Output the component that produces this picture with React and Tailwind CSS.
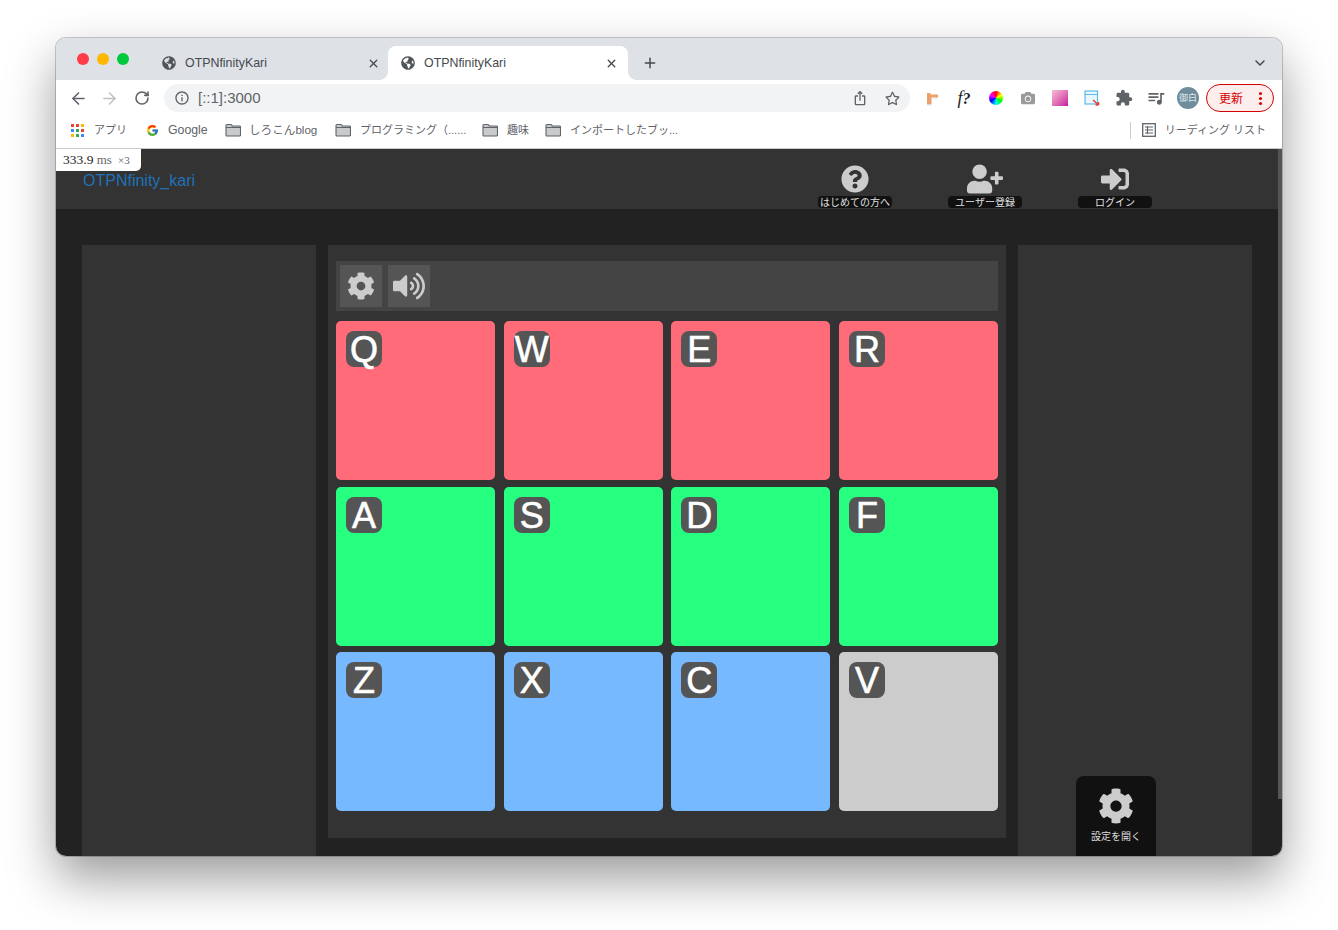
import React from 'react';
import { FaCog, FaGlobeAmericas, FaQuestionCircle, FaSignInAlt, FaUserPlus, FaVolumeUp, FaCamera, FaRegStar } from 'react-icons/fa';
import { FcGoogle } from 'react-icons/fc';
import { MdQueueMusic, MdIosShare, MdInfoOutline, MdExtension } from 'react-icons/md';
import { ArrowLeft, ArrowRight, RotateCw, X, Plus, ChevronDown } from 'lucide-react';

const rows = [
  { keys: ['Q', 'W', 'E', 'R'], colors: ['bg-[#ff6b78]', 'bg-[#ff6b78]', 'bg-[#ff6b78]', 'bg-[#ff6b78]'] },
  { keys: ['A', 'S', 'D', 'F'], colors: ['bg-[#26ff80]', 'bg-[#26ff80]', 'bg-[#26ff80]', 'bg-[#26ff80]'] },
  { keys: ['Z', 'X', 'C', 'V'], colors: ['bg-[#76b9ff]', 'bg-[#76b9ff]', 'bg-[#76b9ff]', 'bg-[#cccccc]'] },
];

const appDots = ['bg-[#ea4335]', 'bg-[#ea4335]', 'bg-[#fbbc04]', 'bg-[#4285f4]', 'bg-[#34a853]', 'bg-[#ea4335]', 'bg-[#fbbc04]', 'bg-[#34a853]', 'bg-[#4285f4]'];

function Folder() {
  return (
    <svg width="16" height="14" viewBox="0 0 16 14" className="shrink-0">
      <path d="M1 2.5C1 1.7 1.6 1.5 2 1.5H6L7.5 3H14.5C15 3 15.5 3.4 15.5 4V12C15.5 12.6 15 13 14.5 13H2C1.4 13 1 12.6 1 12Z" fill="#c9cacb" stroke="#5f6368" strokeWidth="1.1" />
      <path d="M1 4.5H15.5" stroke="#5f6368" strokeWidth="1" />
    </svg>
  );
}

function Tab({ active, className }) {
  return (
    <div className={`relative flex items-center h-[34px] ${className} ${active ? 'bg-white rounded-t-lg' : ''}`}>
      {active && <span className="absolute bottom-0 -left-2 w-2 h-2 bg-[radial-gradient(circle_at_0_0,transparent_7.5px,white_8px)]" />}
      {active && <span className="absolute bottom-0 -right-2 w-2 h-2 bg-[radial-gradient(circle_at_100%_0,transparent_7.5px,white_8px)]" />}
      <FaGlobeAmericas className="text-[#50555a] text-[14px] shrink-0" />
      <span className="ml-[9px] text-[12.4px] text-[#45494e]">OTPNfinityKari</span>
      <X size={13} strokeWidth={2.5} className="ml-auto text-[#45494e]" />
    </div>
  );
}

function ToolButton({ children }) {
  return <div className="w-8 h-7 flex items-center justify-center shrink-0">{children}</div>;
}

function NavItem({ icon, label }) {
  return (
    <div className="w-[74px] flex flex-col items-center">
      <div className="h-[32px] flex items-center text-[#cccccc]">{icon}</div>
      <div className="w-full h-[12px] mt-[1px] bg-[#111111] rounded-[4px] text-[10px] leading-[13px] text-center text-[#e0e0e0] whitespace-nowrap">{label}</div>
    </div>
  );
}

function Pad({ letter, color }) {
  return (
    <div className={`h-[159px] rounded-[5px] p-[10px] ${color}`}>
      <div className="w-9 h-9 rounded-lg bg-[#555555] text-white text-[36px] leading-[37px] text-center [-webkit-text-stroke:0.6px_white]">{letter}</div>
    </div>
  );
}

export default function App() {
  return (
    <div className="h-[930px] overflow-hidden bg-white pt-[38px] pl-[56px] [font-family:'Liberation_Sans','Noto_Sans_CJK_JP',sans-serif]">
      <div className="w-[1226px] h-[818px] rounded-[10px] overflow-hidden flex flex-col ring-1 ring-black/20 shadow-[0_22px_50px_rgba(0,0,0,0.4)]">
        {/* tab strip */}
        <div className="h-[42px] bg-[#dee1e6] flex items-end shrink-0">
          <div className="w-[94px] h-full flex items-start gap-2 pl-[21px] pt-[15px] shrink-0">
            <span className="w-3 h-3 rounded-full bg-[#ff3b47]" />
            <span className="w-3 h-3 rounded-full bg-[#ffb700]" />
            <span className="w-3 h-3 rounded-full bg-[#00c93d]" />
          </div>
          <Tab className="w-[238px] pl-3 pr-2" />
          <Tab active className="w-[240px] pl-[13px] pr-[10px]" />
          <Plus size={16} strokeWidth={2.2} className="ml-[14px] mb-[9px] text-[#45494e]" />
          <ChevronDown size={16} strokeWidth={2.2} className="ml-auto mr-[14px] mb-[9px] text-[#45494e]" />
        </div>

        {/* toolbar */}
        <div className="h-[35px] bg-white flex items-start pt-1 pl-[6px] pr-2 shrink-0">
          <ToolButton><ArrowLeft size={19} className="text-[#5f6368]" /></ToolButton>
          <ToolButton><ArrowRight size={19} className="text-[#bdc1c6] -translate-x-px" /></ToolButton>
          <ToolButton><RotateCw size={16} strokeWidth={2.4} className="text-[#5f6368]" /></ToolButton>
          <div className="flex-1 h-7 ml-[6px] rounded-full bg-[#f1f3f4] flex items-center pl-[10px] pr-[2px]">
            <MdInfoOutline className="text-[#5f6368] text-[16px]" />
            <span className="ml-2 text-[15px] text-[#5f6368]">[::1]:3000</span>
            <div className="ml-auto flex">
              <ToolButton><MdIosShare className="text-[#5f6368] text-[16px]" /></ToolButton>
              <ToolButton><FaRegStar className="text-[#5f6368] text-[15px]" /></ToolButton>
            </div>
          </div>
          <div className="ml-[6px] flex">
            <ToolButton>
              <svg width="16" height="16" viewBox="0 0 16 16">
                <path d="M3 3H6.5V4.5H14V7.5H7.5V14H3Z" fill="#eda06b" />
                <path d="M7.5 7.5H14V8.5H7.5ZM3 14H7.5V15.5H3Z" fill="#e2dcd6" />
              </svg>
            </ToolButton>
            <ToolButton><span className="text-[18px] italic text-[#222222] [font-family:'Liberation_Serif',serif]">f<span className="font-bold text-[16px]">?</span></span></ToolButton>
            <ToolButton><span className="w-[14px] h-[14px] rounded-full bg-[conic-gradient(#ff0000,#ffff00,#00ff00,#00ffff,#0000ff,#ff00ff,#ff0000)]" /></ToolButton>
            <ToolButton><FaCamera className="text-[#9a9a9a] text-[14px]" /></ToolButton>
            <ToolButton><span className="w-4 h-4 bg-linear-to-br from-[#f9bcd2] to-[#c4009f]" /></ToolButton>
            <ToolButton>
              <svg width="16" height="16" viewBox="0 0 16 16">
                <rect x="1" y="1" width="12.5" height="13" fill="#eaf6fd" stroke="#5cbbea" strokeWidth="1.2" />
                <path d="M1 4.5H13.5" stroke="#5cbbea" strokeWidth="1.2" />
                <path d="M9 10L14.5 15M14.5 15V12M14.5 15H11.5" stroke="#e8402f" strokeWidth="1.5" fill="none" />
              </svg>
            </ToolButton>
            <ToolButton><MdExtension className="text-[#5f6368] text-[18px]" /></ToolButton>
            <ToolButton><MdQueueMusic className="text-[#5f6368] text-[20px]" /></ToolButton>
            <ToolButton>
              <span className="w-[22px] h-[22px] rounded-full bg-[#6f8d9c] text-[9px] leading-[22px] text-center text-[#dfe7eb] whitespace-nowrap">御白</span>
            </ToolButton>
          </div>
          <div className="ml-[2px] w-[68px] h-7 rounded-full border border-[#d50000] bg-[#fdeeee] flex items-center pl-3 pr-[11px] shrink-0">
            <span className="text-[12px] leading-[16px] pt-px text-[#d50000]">更新</span>
            <span className="ml-auto flex flex-col gap-[2px]">
              <span className="w-[3px] h-[3px] rounded-full bg-[#d50000]" />
              <span className="w-[3px] h-[3px] rounded-full bg-[#d50000]" />
              <span className="w-[3px] h-[3px] rounded-full bg-[#d50000]" />
            </span>
          </div>
        </div>

        {/* bookmarks bar */}
        <div className="h-[34px] bg-white border-b border-[#c9cbce] flex items-center pl-[15px] pr-[16px] text-[#5f6368] shrink-0 pb-[3px]">
          <div className="grid grid-cols-3 gap-[2px] w-[13px] h-[13px]">
            {appDots.map((c, i) => <span key={i} className={`w-[3px] h-[3px] ${c}`} />)}
          </div>
          <span className="ml-[10px] text-[11px] w-[33px] whitespace-nowrap">アプリ</span>
          <FcGoogle className="ml-[19px] text-[13px]" />
          <span className="ml-[9px] w-[41px] text-[12.3px]">Google</span>
          <span className="ml-[16px]"><Folder /></span>
          <span className="ml-[8px] w-[70px] text-[11.6px] whitespace-nowrap">しろこんblog</span>
          <span className="ml-[16px]"><Folder /></span>
          <span className="ml-[9px] text-[11px] w-[107px] whitespace-nowrap">プログラミング（......</span>
          <span className="ml-[15px]"><Folder /></span>
          <span className="ml-[9px] text-[11px] w-[23px] whitespace-nowrap">趣味</span>
          <span className="ml-[15px]"><Folder /></span>
          <span className="ml-[9px] text-[11px] whitespace-nowrap">インポートしたブッ...</span>
          <div className="ml-auto h-[17px] border-l border-[#c9cbce]" />
          <svg width="14" height="14" viewBox="0 0 14 14" className="ml-[11px]">
            <rect x="0.7" y="0.7" width="12.6" height="12.6" fill="none" stroke="#5f6368" strokeWidth="1.3" />
            <path d="M3 4H11M3 7H11M3 10H11M5.5 3V11" stroke="#5f6368" strokeWidth="1.1" fill="none" />
          </svg>
          <span className="ml-[9px] text-[11px] whitespace-nowrap">リーディング リスト</span>
        </div>

        {/* page */}
        <div className="relative flex-1 min-h-0 bg-[#222222] flex flex-col">
          <div className="absolute top-0 left-0 z-10 w-[85px] h-[22px] bg-white rounded-br-[5px] flex items-center pl-[7px] gap-[6px] [font-family:'Liberation_Serif',serif] text-[13.5px] text-[#222222] whitespace-nowrap">
            <span>333.9 <span className="text-[#666666] text-[13px]">ms</span></span>
            <span className="text-[#666666] text-[11px]">×3</span>
          </div>
          <div className="absolute top-0 right-0 w-1 h-[650px] bg-[#555555]" />

          <header className="h-[60px] bg-[#333333] flex justify-between pl-[27px] pr-[130px] shrink-0">
            <a className="mt-5 text-[16px] leading-6 text-[#2072b8]">OTPNfinity_kari</a>
            <nav className="flex gap-[56px] pt-[14px]">
              <NavItem icon={<FaQuestionCircle size={28} />} label="はじめての方へ" />
              <NavItem icon={<FaUserPlus size={36} />} label="ユーザー登録" />
              <NavItem icon={<FaSignInAlt size={28} />} label="ログイン" />
            </nav>
          </header>

          <main className="flex-1 min-h-0 flex gap-3 pt-9 pl-[26px]">
            <aside className="w-[234px] bg-[#333333]" />
            <section className="w-[678px] h-[593px] bg-[#333333] px-2 pt-4">
              <div className="h-[50px] bg-[#444444] flex gap-[6px] p-1">
                <button className="w-[42px] h-[42px] bg-[#555555] flex items-center justify-center text-[#cccccc]"><FaCog size={28} /></button>
                <button className="w-[42px] h-[42px] bg-[#555555] flex items-center justify-center text-[#cccccc]"><FaVolumeUp size={32} /></button>
              </div>
              <div className="mt-[10px] grid grid-cols-4 gap-x-[8.67px] gap-y-[6.5px]">
                {rows.map((row) =>
                  row.keys.map((k, i) => <Pad key={k} letter={k} color={row.colors[i]} />)
                )}
              </div>
            </section>
            <aside className="w-[234px] bg-[#333333] flex flex-col justify-end pl-[58px]">
              <div className="w-20 h-20 bg-[#111111] rounded-t-lg flex flex-col items-center pt-3">
                <FaCog size={36} className="text-[#cccccc]" />
                <span className="mt-[5px] text-[10px] leading-4 text-[#dddddd]">設定を開く</span>
              </div>
            </aside>
          </main>
        </div>
      </div>
    </div>
  );
}
